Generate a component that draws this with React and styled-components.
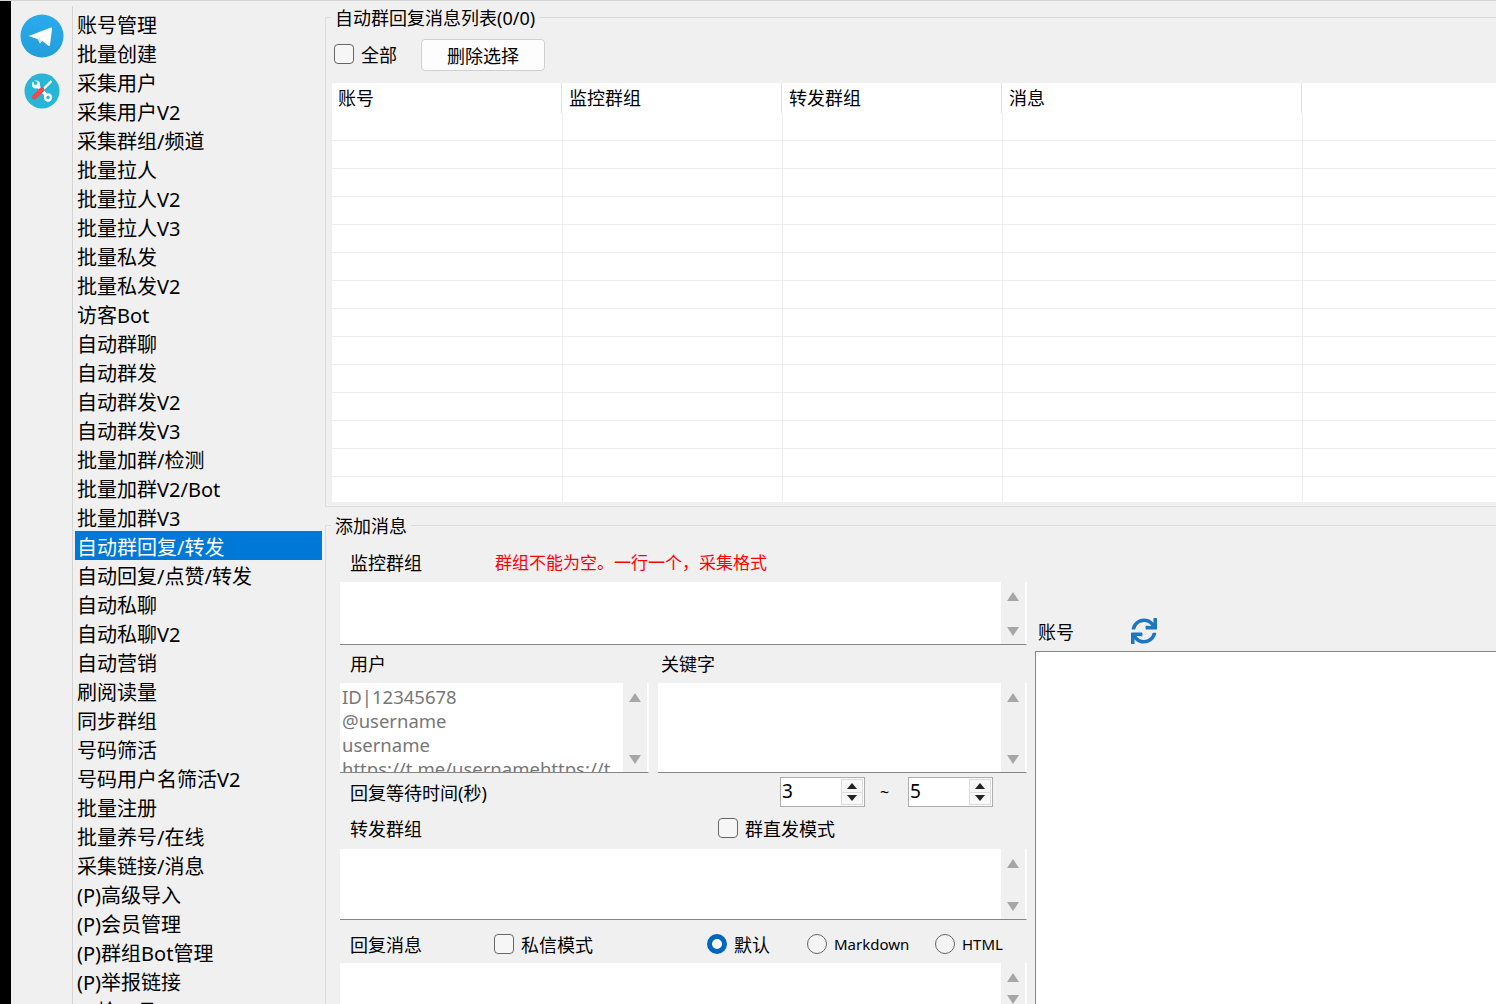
import React from 'react';
import styled, { createGlobalStyle } from 'styled-components';
import { FaSync } from 'react-icons/fa';

const Global = createGlobalStyle`
  html, body { margin: 0; padding: 0; height: 100%; overflow: hidden; background: #f0f0f0; }
  * { box-sizing: border-box; }
`;

const Shell = styled.div`
  display: flex; width: 1496px; height: 1004px; overflow: hidden;
  background: #f0f0f0; border-top: 1px solid #d4d4d4; color: #000;
  font-family: "Noto Sans", "Noto Sans CJK SC", sans-serif; font-size: 18px;
`;
const Strip = styled.div`width: 11px; background: #000; flex: none;`;
const IconRail = styled.div`
  width: 62px; flex: none; margin-top: 5px; border-right: 1px solid #d4d4d4;
  display: flex; flex-direction: column; align-items: center; gap: 15px; padding: 8px 0 0 0;
`;
const Menu = styled.ul`
  list-style: none; margin: 0; padding: 8px 0 0 2px; width: 252px; flex: none;
`;
const MenuItem = styled.li`
  width: 247px; height: 29px; line-height: 30px; padding: 2px 0 0 2px; font-size: 20px; white-space: nowrap;
  background: ${p => (p.$active ? '#0078d7' : 'transparent')};
  color: ${p => (p.$active ? '#fff' : '#000')};
`;
const Main = styled.div`flex: 1; min-width: 0; display: flex; flex-direction: column; padding-top: 16px;`;
const Group = styled.section`
  position: relative; border: 1px solid #dcdcdc; border-width: 1px 0 1px 1px;
`;
const TopGroup = styled(Group)`flex: none; height: 490px; padding: 21px 0 0 6px;`;
const BottomGroup = styled(Group)`
  margin-top: 18px; flex: 1; min-height: 0; border-bottom: 0; padding: 19px 0 0 14px;
  display: grid; grid-template-columns: 687px 1fr; column-gap: 8px;
`;
const Legend = styled.span`
  position: absolute; left: 5px; top: -12px; padding: 0 4px; background: #f0f0f0;
  font-size: 18px; line-height: 24px;
`;
const ActionRow = styled.div`display: flex; align-items: center; height: 31px; padding-left: 2px;`;
const Check = styled.span`
  display: inline-block; flex: none; width: 20px; height: 20px; border: 1px solid #666; border-radius: 4px; background: #f6f6f6;
`;
const CheckLabel = styled.label`display: inline-flex; align-items: center; gap: 7px; font-size: 18px; white-space: nowrap;`;
const SelectAll = styled(CheckLabel)`margin-bottom: 2px;`;
const PushButton = styled.button`
  margin-left: 24px; width: 124px; height: 32px; background: #fdfdfd; border: 1px solid #d0d0d0; border-radius: 4px;
  font: inherit; color: #000; padding: 0;
`;
const Table = styled.table`
  margin-top: 13px; width: 1164px; border-collapse: separate; border-spacing: 0; table-layout: fixed; background: #fff;
`;
const HeadCell = styled.th`
  height: 30px; padding: 0 0 0 6px; font-weight: 400; text-align: left; font-size: 18px; line-height: 30px;
  width: ${p => (p.$w ? `${p.$w}px` : 'auto')};
  ${p => (p.$w ? 'border-right: 1px solid #fff; box-shadow: inset -1px 0 0 #e2e2e2;' : '')}
`;
const Cell = styled.td`
  height: ${p => p.$h}px; padding: 0;
  ${p => (p.$fill ? '' : 'border-right: 1px solid #eeeeee;')}
  ${p => (p.$last ? '' : 'border-bottom: 1px solid #eeeeee;')}
`;
const LeftCol = styled.div`display: flex; flex-direction: column; min-width: 0;`;
const LabelRow = styled.div`
  display: flex; align-items: center; white-space: nowrap;
  height: ${p => p.$h}px; padding: 0 0 ${p => p.$pb}px ${p => p.$pl}px;
`;
const ErrorText = styled.span`margin-left: 73px; color: #f00; font-size: 17px;`;
const Box = styled.div`
  position: relative; overflow: hidden; background: #fff; width: ${p => p.$w || 687}px; height: ${p => p.$h}px;
  border-bottom: 1px solid #858585; border-right: 1px solid #fafafa; padding: 2px 0 0 2px;
  font-size: 18.5px; line-height: 24px; color: #777;
`;
const Placeholder = styled.div`white-space: nowrap;`;
const ScrollBar = styled.div`
  position: absolute; top: 0; right: 0; bottom: 0; width: 25px; background: #f0f0f0; border-right: 1px solid #fff;
  display: flex; flex-direction: column; justify-content: space-between; align-items: center; padding: 10px 0 8px;
`;
const Arrow = styled.span`
  width: 0; height: 0; border-left: 6px solid transparent; border-right: 6px solid transparent;
  ${p => (p.$down ? 'border-top: 9px solid #a6a6a6;' : 'border-bottom: 9px solid #a6a6a6;')}
`;
const TwoCols = styled.div`display: grid; grid-template-columns: 318px 369px;`;
const WaitRow = styled.div`display: flex; align-items: center; height: 42px; padding: 0 0 4px 10px;`;
const WaitLabel = styled.span`width: 430px; white-space: nowrap;`;
const Spin = styled.div`
  display: flex; width: 85px; height: 30px; border: 1px solid #adadad; background: #fff; padding: 1px;
`;
const SpinValue = styled.span`flex: 1; font-size: 19px; line-height: 24px;`;
const SpinButtons = styled.div`display: flex; flex-direction: column; width: 22px; border: 1px solid #dcdcdc; background: #f8f8f8;`;
const SpinButton = styled.span`
  flex: 1; display: flex; align-items: center; justify-content: center;
  & + & { border-top: 1px solid #dcdcdc; }
`;
const SpinArrow = styled.span`
  width: 0; height: 0; border-left: 5px solid transparent; border-right: 5px solid transparent;
  ${p => (p.$down ? 'border-top: 6px solid #222;' : 'border-bottom: 6px solid #222;')}
`;
const Tilde = styled.span`width: 43px; padding-right: 4px; text-align: center; font-size: 16px;`;
const ForwardRow = styled.div`display: flex; align-items: center; height: 34px; padding: 0 0 8px 10px;`;
const ForwardLabel = styled.span`width: 368px;`;
const ReplyRow = styled.div`display: flex; align-items: center; height: 43px; padding: 4px 0 0 10px;`;
const ReplyLabel = styled.span`width: 144px;`;
const Radios = styled.div`display: flex; margin-left: 114px;`;
const RadioLabel = styled.label`
  display: inline-flex; align-items: center; gap: 7px; width: ${p => p.$w}px; white-space: nowrap;
  font-size: ${p => (p.$latin ? 15 : 18)}px;
`;
const Radio = styled.span`
  flex: none; width: 20px; height: 20px; border-radius: 50%;
  ${p => (p.$on ? 'background: #fff; border: 5.5px solid #0067c0;' : 'border: 1px solid #666; background: #f4f4f4;')}
`;
const RightCol = styled.div`display: flex; flex-direction: column; padding-top: 68px;`;
const AccountHead = styled.div`display: flex; align-items: center; height: 38px; padding: 0 0 2px 3px;`;
const AccountLabel = styled.span`width: 93px;`;
const RefreshIcon = styled(FaSync)`color: #1d77c0; width: 26px; height: 26px;`;
const AccountList = styled.div`flex: 1; background: #fff; border: 1px solid #858585; border-width: 1px 0 0 1px;`;

const items = ['账号管理','批量创建','采集用户','采集用户V2','采集群组/频道','批量拉人','批量拉人V2','批量拉人V3','批量私发','批量私发V2','访客Bot','自动群聊','自动群发','自动群发V2','自动群发V3','批量加群/检测','批量加群V2/Bot','批量加群V3','自动群回复/转发','自动回复/点赞/转发','自动私聊','自动私聊V2','自动营销','刷阅读量','同步群组','号码筛活','号码用户名筛活V2','批量注册','批量养号/在线','采集链接/消息','(P)高级导入','(P)会员管理','(P)群组Bot管理','(P)举报链接','一检工具'];
const columns = [['账号', 231], ['监控群组', 220], ['转发群组', 220], ['消息', 300], ['', 0]];
const rowHeights = [...Array(13).fill(28), 25];

const TelegramLogo = () => (
  <svg width="44" height="44" viewBox="0 0 44 44" aria-hidden="true">
    <defs>
      <linearGradient id="tg" x1="0" y1="0" x2="0" y2="1">
        <stop offset="0" stopColor="#2aabee" />
        <stop offset="1" stopColor="#229ed9" />
      </linearGradient>
    </defs>
    <circle cx="22" cy="22" r="21.5" fill="url(#tg)" />
    <path d="M8.700 22 31 13.500q1.300-.4 1.100 1L30 31q-.3 1.400-1.600.7L22 26.800 20 29.500 18 25.200Z" fill="#fff" />
    <path d="M18 25.200 20 29.500 22 26.800 19.500 25 28 17.500Z" fill="#cfe6f5" />
  </svg>
);
const ToolsLogo = () => (
  <svg width="36" height="36" viewBox="0 0 36 36" aria-hidden="true">
    <circle cx="18" cy="18" r="17.500" fill="#27b5d8" />
    <path d="M12 11 23 23" stroke="#fff" strokeWidth="3.200" />
    <circle cx="24" cy="24.500" r="3" stroke="#fff" strokeWidth="2.400" fill="#27b5d8" />
    <circle cx="12" cy="11.500" r="4" fill="#fff" />
    <path d="M8 7l5.500 2-.5 2.500-2.500.5-2-5.500Z" fill="#27b5d8" />
    <path d="M27.500 8 18 17.500" stroke="#fff" strokeWidth="2.400" />
    <path d="M18 16.500 10.500 24" stroke="#ee4b4b" strokeWidth="5" strokeLinecap="round" />
  </svg>
);
const Scroll = () => (
  <ScrollBar><Arrow /><Arrow $down /></ScrollBar>
);
const SpinBox = ({ value }) => (
  <Spin>
    <SpinValue>{value}</SpinValue>
    <SpinButtons>
      <SpinButton><SpinArrow /></SpinButton>
      <SpinButton><SpinArrow $down /></SpinButton>
    </SpinButtons>
  </Spin>
);

export default function App() {
  return (
    <>
      <Global />
      <Shell>
        <Strip />
        <IconRail>
          <TelegramLogo />
          <ToolsLogo />
        </IconRail>
        <Menu>
          {items.map((t, i) => <MenuItem key={t} $active={i === 18}>{t}</MenuItem>)}
        </Menu>
        <Main>
          <TopGroup>
            <Legend>自动群回复消息列表(0/0)</Legend>
            <ActionRow>
              <SelectAll><Check />全部</SelectAll>
              <PushButton>删除选择</PushButton>
            </ActionRow>
            <Table>
              <thead>
                <tr>{columns.map(([t, w], c) => <HeadCell key={c} $w={w}>{t}</HeadCell>)}</tr>
              </thead>
              <tbody>
                {rowHeights.map((h, r) => (
                  <tr key={r}>
                    {columns.map(([t, w], c) => (
                      <Cell key={c} $h={h} $fill={!w} $last={r === rowHeights.length - 1} />
                    ))}
                  </tr>
                ))}
              </tbody>
            </Table>
          </TopGroup>
          <BottomGroup>
            <Legend>添加消息</Legend>
            <LeftCol>
              <LabelRow $h={37} $pb={4} $pl={10}>监控群组<ErrorText>群组不能为空。一行一个，采集格式</ErrorText></LabelRow>
              <Box $h={63}><Scroll /></Box>
              <TwoCols>
                <LabelRow $h={38} $pb={2} $pl={10}>用户</LabelRow>
                <LabelRow $h={38} $pb={2} $pl={3}>关键字</LabelRow>
              </TwoCols>
              <TwoCols>
                <Box $w={309} $h={90}>
                  <Placeholder>ID|12345678</Placeholder>
                  <Placeholder>@username</Placeholder>
                  <Placeholder>username</Placeholder>
                  <Placeholder>https://t.me/usernamehttps://t</Placeholder>
                  <Scroll />
                </Box>
                <Box $w={369} $h={90}><Scroll /></Box>
              </TwoCols>
              <WaitRow>
                <WaitLabel>回复等待时间(秒)</WaitLabel>
                <SpinBox value="3" />
                <Tilde>~</Tilde>
                <SpinBox value="5" />
              </WaitRow>
              <ForwardRow>
                <ForwardLabel>转发群组</ForwardLabel>
                <CheckLabel><Check />群直发模式</CheckLabel>
              </ForwardRow>
              <Box $h={71}><Scroll /></Box>
              <ReplyRow>
                <ReplyLabel>回复消息</ReplyLabel>
                <CheckLabel><Check />私信模式</CheckLabel>
                <Radios>
                  <RadioLabel $w={100}><Radio $on />默认</RadioLabel>
                  <RadioLabel $w={128} $latin><Radio />Markdown</RadioLabel>
                  <RadioLabel $w={70} $latin><Radio />HTML</RadioLabel>
                </Radios>
              </ReplyRow>
              <Box $h={50}><Scroll /></Box>
            </LeftCol>
            <RightCol>
              <AccountHead>
                <AccountLabel>账号</AccountLabel>
                <RefreshIcon />
              </AccountHead>
              <AccountList />
            </RightCol>
          </BottomGroup>
        </Main>
      </Shell>
    </>
  );
}
